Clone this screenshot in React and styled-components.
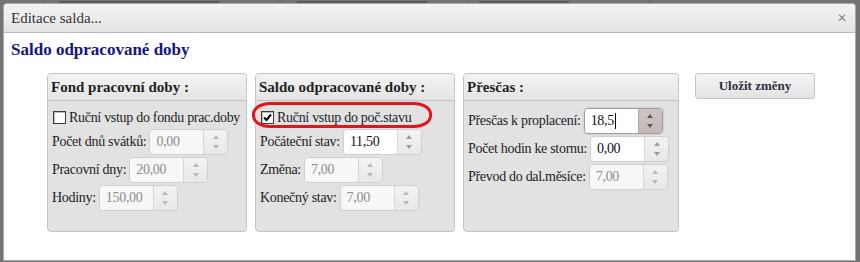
import React from "react";
import styled, { createGlobalStyle, css } from "styled-components";

const GlobalStyle = createGlobalStyle`
  html, body {
    margin: 0;
    padding: 0;
    background: #747474;
    font-family: "Liberation Serif", "Times New Roman", serif;
    color: #222;
  }
`;

const Page = styled.div`
  width: 860px;
  height: 262px;
  overflow: hidden;
  padding: 0 4px 0 3px;
  box-sizing: border-box;
`;

/* the dimmed page behind the modal, only its last pixels peek out */
const Backdrop = styled.div`
  height: 3px;
  display: flex;
  align-items: flex-end;
`;

const Smudge = styled.span`
  margin-left: ${(p) => p.$ml}px;
  width: ${(p) => p.$w}px;
  height: 2px;
  background: ${(p) => p.$c || "#5a5a5a"};
`;

const Dialog = styled.div`
  width: 853px;
  height: 258px;
  box-sizing: border-box;
  background: #fff;
  border: 1px solid #a8a8a8;
  border-radius: 4px 4px 0 0;
  display: flex;
  flex-direction: column;
`;

const TitleBar = styled.div`
  height: 29px;
  box-sizing: border-box;
  display: flex;
  align-items: center;
  justify-content: space-between;
  padding: 0 8px 0 7px;
  background: linear-gradient(#f3f3f3, #e4e4e4);
  border-bottom: 1px solid #b8b8b8;
  border-radius: 3px 3px 0 0;
  font-size: 15px;
  color: #333;
`;

const Close = styled.span`
  font-family: "DejaVu Sans", sans-serif;
  font-size: 12px;
  color: #8a8a8a;
`;

const Body = styled.div`
  padding: 7px 7px 0 7px;
`;

const Heading = styled.h2`
  margin: 0;
  font-size: 17px;
  line-height: 20px;
  font-weight: bold;
  color: #151585;
`;

const Columns = styled.div`
  display: flex;
  align-items: flex-start;
  gap: 8px;
  margin: 13px 0 0 36px;
`;

const Panel = styled.div`
  width: ${(p) => p.$w}px;
  height: 159px;
  box-sizing: border-box;
  border: 1px solid #c4c4c4;
  border-radius: 4px;
  background: #e2e2e2;
`;

const PanelHead = styled.div`
  height: 27px;
  box-sizing: border-box;
  display: flex;
  align-items: center;
  padding: 0 3px;
  background: linear-gradient(#f4f4f4, #e4e4e4);
  border-bottom: 1px solid #c2c2c2;
  border-radius: 3px 3px 0 0;
  font-size: 15px;
  font-weight: bold;
  color: #222;
`;

const PanelBody = styled.div`
  display: flex;
  flex-direction: column;
  gap: 2px;
  padding: 7px 4px;
`;

const CheckRow = styled.label`
  position: relative;
  height: 19px;
  display: flex;
  align-items: center;
  gap: 3px;
  padding-left: 1px;
  font-size: 14px;
  letter-spacing: -0.3px;
  white-space: nowrap;
`;

const Box = styled.span`
  width: 11px;
  height: 11px;
  flex: none;
  border: 1px solid #3a3a3a;
  background: #fff;
  box-shadow: inset 1px 1px 0 #bbb;
  display: flex;
  align-items: center;
  justify-content: center;
`;

const Highlight = styled.span`
  position: absolute;
  left: -8px;
  top: -6px;
  width: 174px;
  height: 20px;
  border: 3px solid #e3141c;
  border-radius: 18px / 12px;
  pointer-events: none;
`;

const Row = styled.div`
  height: 26px;
  display: flex;
  align-items: center;
  gap: 3px;
  font-size: 14px;
  letter-spacing: -0.3px;
  white-space: nowrap;
`;

const Spinner = styled.div`
  width: 79px;
  height: 26px;
  flex: none;
  box-sizing: border-box;
  display: flex;
  border: 1px solid ${(p) => (p.$focus ? "#a59b9a" : "#d0d0d0")};
  border-radius: 4px;
  overflow: hidden;
  letter-spacing: 0;
  ${(p) =>
    p.$focus &&
    css`
      box-shadow: 0 0 2px #b8b0b0;
    `}
`;

const Field = styled.div`
  flex: 1;
  display: flex;
  align-items: center;
  padding-left: 6px;
  font-size: 14px;
  letter-spacing: -0.3px;
  background: ${(p) => (p.$disabled ? "#f7f7f7" : "#fff")};
  color: ${(p) => (p.$disabled ? "#8c8c8c" : "#111")};
`;

const Caret = styled.span`
  width: 1px;
  height: 16px;
  background: #000;
  margin-left: 1px;
`;

const Arrows = styled.div`
  width: 23px;
  border-left: 1px solid ${(p) => (p.$focus ? "#b4aaa9" : "#d6d6d6")};
  background: ${(p) => (p.$focus ? "linear-gradient(#cdc5c4, #c1b8b7)" : "linear-gradient(#f3f3f3, #e8e8e8)")};
  display: flex;
  flex-direction: column;
  align-items: center;
  justify-content: center;
  gap: 6px;
`;

const Tri = styled.span`
  width: 0;
  height: 0;
  border-left: 3px solid transparent;
  border-right: 3px solid transparent;
  ${(p) =>
    p.$up
      ? css`border-bottom: 4px solid ${p.$c};`
      : css`border-top: 4px solid ${p.$c};`}
`;

const SaveButton = styled.button`
  margin-left: 8px;
  width: 120px;
  height: 26px;
  border: 1px solid #c4c4c4;
  border-radius: 3px;
  background: linear-gradient(#f5f5f5, #e3e3e3);
  font-family: "Liberation Serif", serif;
  font-size: 13px;
  font-weight: bold;
  color: #2f2f3f;
  padding: 0;
`;

const Spin = ({ value, disabled, focus }) => {
  const c = focus ? "#5f5756" : disabled ? "#b9b9b9" : "#9a9a9a";
  return (
    <Spinner $focus={focus}>
      <Field $disabled={disabled}>
        {value}
        {focus && <Caret />}
      </Field>
      <Arrows $focus={focus}>
        <Tri $up $c={c} />
        <Tri $c={c} />
      </Arrows>
    </Spinner>
  );
};

const Check = ({ checked, label, marked }) => (
  <CheckRow>
    {marked && <Highlight />}
    <Box>
      {checked && (
        <svg width="9" height="9" viewBox="0 0 9 9">
          <path d="M1 4.5 L3.5 7 L8 1.5" fill="none" stroke="#000" strokeWidth="2" />
        </svg>
      )}
    </Box>
    {label}
  </CheckRow>
);

const Field2 = ({ label, ...rest }) => (
  <Row>
    {label}
    <Spin {...rest} />
  </Row>
);

export default function App() {
  return (
    <Page>
      <GlobalStyle />
      <Backdrop>
        <Smudge $ml={40} $w={2} $c="#666" />
        <Smudge $ml={14} $w={160} />
        <Smudge $ml={60} $w={2} $c="#666" />
        <Smudge $ml={16} $w={130} />
        <Smudge $ml={40} $w={2} $c="#666" />
        <Smudge $ml={10} $w={90} />
        <Smudge $ml={80} $w={2} $c="#666" />
      </Backdrop>
      <Dialog>
        <TitleBar>
          Editace salda...
          <Close>✕</Close>
        </TitleBar>
        <Body>
          <Heading>Saldo odpracované doby</Heading>
          <Columns>
            <Panel $w={200}>
              <PanelHead>Fond pracovní doby :</PanelHead>
              <PanelBody>
                <Check label="Ruční vstup do fondu prac.doby" />
                <Field2 label="Počet dnů svátků:" value="0,00" disabled />
                <Field2 label="Pracovní dny:" value="20,00" disabled />
                <Field2 label="Hodiny:" value="150,00" disabled />
              </PanelBody>
            </Panel>
            <Panel $w={200}>
              <PanelHead>Saldo odpracované doby :</PanelHead>
              <PanelBody>
                <Check label="Ruční vstup do poč.stavu" checked marked />
                <Field2 label="Počáteční stav:" value="11,50" />
                <Field2 label="Změna:" value="7,00" disabled />
                <Field2 label="Konečný stav:" value="7,00" disabled />
              </PanelBody>
            </Panel>
            <Panel $w={216}>
              <PanelHead>Přesčas :</PanelHead>
              <PanelBody>
                <Field2 label="Přesčas k proplacení:" value="18,5" focus />
                <Field2 label="Počet hodin ke stornu:" value="0,00" />
                <Field2 label="Převod do dal.měsíce:" value="7,00" disabled />
              </PanelBody>
            </Panel>
            <SaveButton>Uložit změny</SaveButton>
          </Columns>
        </Body>
      </Dialog>
    </Page>
  );
}
